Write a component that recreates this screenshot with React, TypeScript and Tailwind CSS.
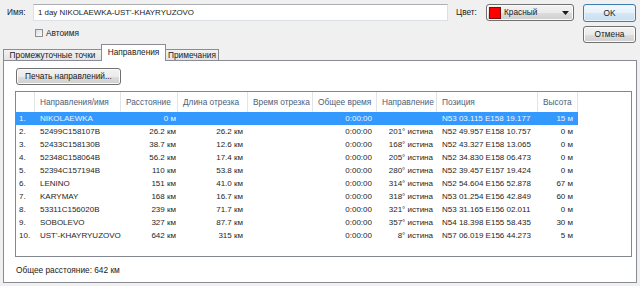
import React from "react";

type Row = [string, string, string, string, string, string, string, string, string];

const rows: Row[] = [
  ["1.", "NIKOLAEWKA", "0 м", "", "", "0:00:00", "", "N53 03.115 E158 19.177", "15 м"],
  ["2.", "52499C158107B", "26.2 км", "26.2 км", "", "0:00:00", "201° истина", "N52 49.957 E158 10.757", "0 м"],
  ["3.", "52433C158130B", "38.7 км", "12.6 км", "", "0:00:00", "168° истина", "N52 43.327 E158 13.065", "0 м"],
  ["4.", "52348C158064B", "56.2 км", "17.4 км", "", "0:00:00", "205° истина", "N52 34.830 E158 06.473", "0 м"],
  ["5.", "52394C157194B", "110 км", "53.8 км", "", "0:00:00", "280° истина", "N52 39.457 E157 19.424", "0 м"],
  ["6.", "LENINO", "151 км", "41.0 км", "", "0:00:00", "314° истина", "N52 54.604 E156 52.878", "67 м"],
  ["7.", "KARYMAY", "168 км", "16.7 км", "", "0:00:00", "318° истина", "N53 01.254 E156 42.849", "60 м"],
  ["8.", "53311C156020B", "239 км", "71.7 км", "", "0:00:00", "321° истина", "N53 31.165 E156 02.011", "0 м"],
  ["9.", "SOBOLEVO", "327 км", "87.7 км", "", "0:00:00", "357° истина", "N54 18.398 E155 58.435", "30 м"],
  ["10.", "UST'-KHAYRYUZOVO", "642 км", "315 км", "", "0:00:00", "8° истина", "N57 06.019 E156 44.273", "5 м"],
];

const cols = [
  { w: "w-[19px]", cell: "justify-start pl-[3px]", head: "" },
  { w: "w-[86px]", cell: "justify-start pl-[5px]", head: "Направления/имя" },
  { w: "w-[57px]", cell: "justify-end pr-[2px]", head: "Расстояние" },
  { w: "w-[70px]", cell: "justify-end pr-[5px]", head: "Длина отрезка" },
  { w: "w-[65px]", cell: "justify-end pr-[5px]", head: "Время отрезка" },
  { w: "w-[64px]", cell: "justify-end pr-[5px]", head: "Общее время" },
  { w: "w-[60px]", cell: "justify-end pr-[4px]", head: "Направление" },
  { w: "w-[101px]", cell: "justify-start pl-[5px]", head: "Позиция" },
  { w: "w-[40px]", cell: "justify-end pr-[5px]", head: "Высота" },
];

const btn =
  "border border-[#707070] rounded-[3px] bg-[linear-gradient(to_bottom,#f2f2f2_0%,#ebebeb_50%,#dddddd_51%,#cfcfcf_100%)] shadow-[inset_0_0_0_1px_#fcfcfc]";

export default function App() {
  return (
    <div className="w-[640px] h-[286px] bg-[#f0f0f0] text-[8.3px] text-[#1a1a1a] font-['Liberation_Sans',Arial,sans-serif] overflow-hidden select-none flex flex-col">
      {/* top area */}
      <div className="h-[44px] flex pt-[4px] pl-[7px] pr-[4px]">
        <div className="flex flex-col">
          <div className="flex items-center h-[17px]">
            <span className="w-[26px]">Имя:</span>
            <div className="w-[415px] h-[17px] bg-white border border-[#dbdfe6] border-t-[#abadb3] pl-[4px] flex items-center text-[7.9px]">
              1 day NIKOLAEWKA-UST'-KHAYRYUZOVO
            </div>
            <span className="ml-[8px] w-[30px]">Цвет:</span>
            <div className={`w-[88px] h-[17px] flex items-center pl-[2px] ${btn}`}>
              <div className="w-[12px] h-[12px] bg-[#ff0000] border border-[#7a1010]" />
              <span className="ml-[3px]">Красный</span>
              <div className="flex-1" />
              <svg width="7" height="4" viewBox="0 0 7 4" className="mr-[4px]">
                <path d="M0 0H7L3.5 4Z" fill="#1a1a1a" />
              </svg>
            </div>
          </div>
          <div className="flex items-center h-[8px] mt-[8px] ml-[28px]">
            <div className="w-[8px] h-[8px] border border-[#8e8f8f] bg-[linear-gradient(135deg,#dcdcdc,#fbfbfb)]" />
            <span className="ml-[3px]">Автоимя</span>
          </div>
        </div>
        <div className="ml-[9px] flex flex-col">
          <div className="w-[53px] h-[18px] rounded-[3px] border border-[#3c7fb1] bg-[linear-gradient(to_bottom,#f4f9fd_0%,#e6f1fa_50%,#d6e7f5_51%,#c7dff2_100%)] shadow-[inset_0_0_0_1px_#e8f4fc] flex items-center justify-center">
            OK
          </div>
          <div className={`mt-[4px] w-[53px] h-[17px] flex items-center justify-center ${btn}`}>Отмена</div>
        </div>
      </div>

      {/* tabs */}
      <div className="h-[16px] flex items-end pl-[3px] relative z-10">
        <div className="w-[99px] h-[11px] border border-b-0 border-[#898c95] bg-[linear-gradient(to_bottom,#f2f2f2,#e3e3e3)] flex items-center justify-center leading-none">
          Промежуточные точки
        </div>
        <div className="-ml-px w-[65px] h-[17px] mb-[-1px] border border-b-0 border-[#898c95] bg-white flex items-center justify-center leading-none pb-[2px]">
          Направления
        </div>
        <div className="-ml-px w-[54px] h-[11px] border border-b-0 border-[#898c95] bg-[linear-gradient(to_bottom,#f2f2f2,#e3e3e3)] flex items-center justify-center leading-none">
          Примечания
        </div>
      </div>

      {/* panel */}
      <div className="mx-[3px] h-[223px] border border-[#898c95] bg-white pt-[7px] pl-[11px] flex flex-col">
        <div className={`ml-[1px] w-[105px] h-[17px] flex items-center justify-center ${btn}`}>
          Печать направлений...
        </div>
        <div className="mt-[6px] w-[617px] h-[166px] border border-[#828790] bg-white flex flex-col">
          <div className="h-[20px] flex text-[#4c607a]">
            {cols.map((c, i) => (
              <div
                key={i}
                className={`${c.w} h-full flex items-center pl-[5px] border-r border-[#e3e4e6] whitespace-nowrap`}
              >
                {c.head}
              </div>
            ))}
            <div className="flex-1" />
          </div>
          {rows.map((r, ri) => (
            <div
              key={ri}
              className={`h-[13px] flex w-[562px] text-[8px] ${
                ri === 0 ? "bg-[#3399ff] text-[#eef6ff]" : "text-[#1e1e1e]"
              }`}
            >
              {r.map((v, ci) => (
                <div key={ci} className={`${cols[ci].w} h-full flex items-center whitespace-nowrap ${cols[ci].cell}`}>
                  {v}
                </div>
              ))}
            </div>
          ))}
        </div>
        <div className="mt-[7px] pl-[1px] h-[12px] leading-[12px]">Общее расстояние: 642 км</div>
      </div>
    </div>
  );
}
